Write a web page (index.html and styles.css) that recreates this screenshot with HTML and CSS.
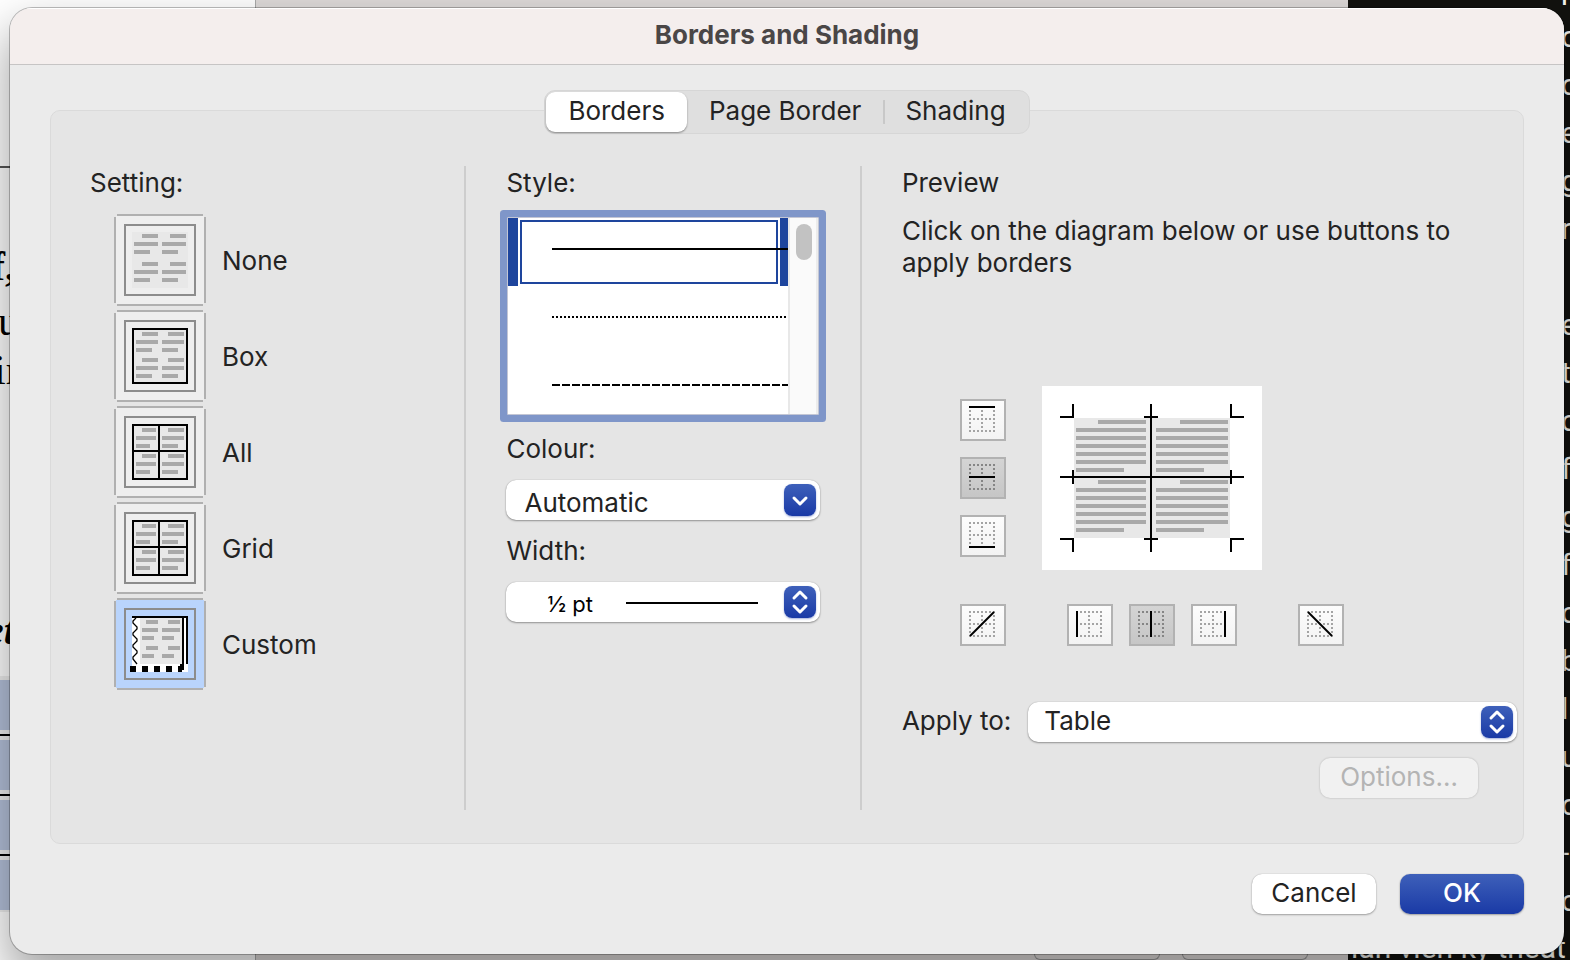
FILE: index.html
```html
<!DOCTYPE html>
<html lang="en-GB">
<head>
<meta charset="utf-8">
<meta name="viewport" content="width=device-width, initial-scale=1">
<title>Borders and Shading</title>
<link rel="stylesheet" href="styles.css">
</head>
<body>
<svg class="defs" aria-hidden="true">
  <defs>
    <symbol id="tile" viewBox="0 0 92 92">
      <path d="M3 1H89M3 91H89M1 3V89M91 3V89" stroke="#b0b0b0" stroke-width="2"/>
      <rect x="11" y="11" width="70" height="70" fill="none" stroke="#8c8c8c" stroke-width="2"/>
    </symbol>
    <symbol id="cells" viewBox="0 0 92 92">
      <rect x="19" y="19" width="54" height="54" fill="#e8e8e8" stroke="#000" stroke-width="2"/>
      <path d="M45 18V74M18 45H74" stroke="#000" stroke-width="2"/>
      <path d="M28 24H42M54 24H70M22 32H42M48 32H70M22 40H36M48 40H64M28 50H42M54 50H70M22 58H42M48 58H70M22 66H36M48 66H64" stroke="#a9a9a9" stroke-width="4"/>
    </symbol>
    <symbol id="dots" viewBox="0 0 42 38">
      <path d="M7 6H33M7 18H33M7 30H33" stroke="currentColor" stroke-width="2" stroke-dasharray="2 2"/>
      <path d="M8 5V31M20 5V31M32 5V31" stroke="currentColor" stroke-width="2" stroke-dasharray="2 2"/>
    </symbol>
    <symbol id="updown" viewBox="0 0 32 32">
      <path d="M10 12L16 6L22 12M10 20L16 26L22 20" fill="none" stroke="#fff" stroke-width="3" stroke-linecap="round" stroke-linejoin="round"/>
    </symbol>
    <symbol id="down" viewBox="0 0 32 32">
      <path d="M10 14L16 20L22 14" fill="none" stroke="#fff" stroke-width="3" stroke-linecap="round" stroke-linejoin="round"/>
    </symbol>
  </defs>
</svg>

<div class="desktop" aria-hidden="true">
  <div class="page">
    <span class="rule"></span>
    <span class="word w1">f,</span>
    <span class="word w2">u</span>
    <span class="word w3">in</span>
    <span class="word w4">et</span>
    <span class="rows"><i></i><b></b><i></i><b></b><i></i><b></b><i></i></span>
  </div>
  <div class="back"><span></span><span></span></div>
  <div class="dark">
    <p class="lines">p<br>o<br>o<br>e<br>g<br>r<br><br>e<br>t<br>c<br>fa<br>g<br>fo<br>c<br>b<br>l<br>u<br>o<br>-<br>c</p>
    <p class="last">ıan vıen ky theat</p>
  </div>
</div>

<main class="dialog" role="dialog" aria-labelledby="title">
  <header class="titlebar"><h1 id="title">Borders and Shading</h1></header>
  <div class="content">
    <nav class="tabs" role="tablist">
      <button class="tab active" role="tab" aria-selected="true">Borders</button>
      <button class="tab" role="tab">Page Border</button>
      <button class="tab last-tab" role="tab">Shading</button>
    </nav>
    <div class="panel">
      <fieldset class="column setting">
        <legend class="label">Setting:</legend>
        <div class="choices">
          <label class="choice"><input type="radio" name="setting">
            <svg class="tile" viewBox="0 0 92 92"><use href="#tile"/>
              <path d="M18 18H74V74H18Z" fill="#e8e8e8"/>
              <path d="M28 22H44M56 22H72M20 30H44M48 30H72M20 38H36M48 38H64M28 50H44M56 50H72M20 58H44M48 58H72M20 66H36M48 66H64" stroke="#a9a9a9" stroke-width="4"/>
            </svg><span>None</span></label>
          <label class="choice"><input type="radio" name="setting">
            <svg class="tile" viewBox="0 0 92 92"><use href="#tile"/>
              <rect x="19" y="19" width="54" height="54" fill="#e8e8e8" stroke="#000" stroke-width="2"/>
              <path d="M28 24H44M54 24H70M22 32H44M48 32H70M22 40H38M48 40H64M28 50H44M54 50H70M22 58H44M48 58H70M22 66H38M48 66H64" stroke="#a9a9a9" stroke-width="4"/>
            </svg><span>Box</span></label>
          <label class="choice"><input type="radio" name="setting">
            <svg class="tile" viewBox="0 0 92 92"><use href="#tile"/><use href="#cells"/></svg><span>All</span></label>
          <label class="choice"><input type="radio" name="setting">
            <svg class="tile" viewBox="0 0 92 92"><use href="#tile"/><use href="#cells"/></svg><span>Grid</span></label>
          <label class="choice"><input type="radio" name="setting" checked>
            <svg class="tile" viewBox="0 0 92 92"><use href="#tile"/>
              <path d="M18 18H74V74H18Z" fill="#fff"/>
              <path d="M26 18H68V66H26Z" fill="#e8e8e8"/>
              <path d="M32 24H44M54 24H66M28 32H44M48 32H66M28 40H40M48 40H60M32 50H44M54 50H66M28 58H40M48 58H60" stroke="#a9a9a9" stroke-width="4"/>
              <path d="M18 19H74M69 18V72M73 18V66" stroke="#000" stroke-width="2"/>
              <path d="M16 68h6v6h-6zM28 68h6v6h-6zM40 68h6v6h-6zM52 68h6v6h-6zM64 68h2v-2h4v6h-2v2h-4z"/>
              <path d="M22 20L19 23V25L23 29V31L19 35V37L23 41V43L19 47V49L23 53V55L19 59V61L23 66" fill="none" stroke="#000" stroke-width="1.3"/>
            </svg><span>Custom</span></label>
        </div>
      </fieldset>

      <section class="column style">
        <h2 class="label" id="style-label">Style:</h2>
        <div class="listbox" role="radiogroup" aria-labelledby="style-label">
          <div class="options">
            <label class="option"><input type="radio" name="style" aria-label="Solid" checked><span class="line solid"></span></label>
            <label class="option"><input type="radio" name="style" aria-label="Dotted"><span class="line dotted"></span></label>
            <label class="option"><input type="radio" name="style" aria-label="Dashed"><span class="line dashed"></span></label>
          </div>
          <div class="track"><span class="thumb"></span></div>
        </div>
        <label class="label field-label" for="colour">Colour:</label>
        <div class="picker">
          <select id="colour" class="low"><option>Automatic</option></select>
          <svg class="knob" viewBox="0 0 32 32"><use href="#down"/></svg>
        </div>
        <label class="label field-label" for="width">Width:</label>
        <div class="picker">
          <select id="width" class="weight"><option>½ pt</option></select>
          <svg class="knob" viewBox="0 0 32 32"><use href="#updown"/></svg>
        </div>
      </section>

      <section class="column preview">
        <h2 class="label">Preview</h2>
        <p class="hint">Click on the diagram below or use buttons to apply borders</p>
        <div class="editor">
          <div class="edges vertical">
            <button class="edge" aria-label="Top border"><svg viewBox="0 0 42 38"><use href="#dots"/><path d="M7 6H33"/></svg></button>
            <button class="edge on" aria-label="Inside horizontal border"><svg viewBox="0 0 42 38"><use href="#dots"/><path d="M7 18H33"/></svg></button>
            <button class="edge" aria-label="Bottom border"><svg viewBox="0 0 42 38"><use href="#dots"/><path d="M7 30H33"/></svg></button>
          </div>
          <svg class="diagram" viewBox="0 0 220 184" role="img" aria-label="Border diagram">
            <path d="M32 32H188V152H32Z" fill="#e8e8e8"/>
            <g stroke="#a9a9a9" stroke-width="4">
              <path id="text-block" d="M56 36H104M34 44H104M34 52H104M34 60H104M34 68H104M34 76H104M34 84H82M138 36H186M114 44H186M114 52H186M114 60H186M114 68H186M114 76H186M114 84H162"/>
              <use href="#text-block" y="60"/>
            </g>
            <path d="M109 18V166M18 91H202M18 31H32M31 18V32M188 31H202M189 18V32M18 153H32M31 152V166M188 153H202M189 152V166M102 31H116M102 153H116M31 84V98M189 84V98" stroke="#000" stroke-width="2"/>
          </svg>
          <button class="edge first" aria-label="Diagonal up border"><svg viewBox="0 0 42 38"><use href="#dots"/><path d="M8 30L32 6"/></svg></button>
          <div class="edges">
            <button class="edge" aria-label="Left border"><svg viewBox="0 0 42 38"><use href="#dots"/><path d="M8 5V31"/></svg></button>
            <button class="edge on" aria-label="Inside vertical border"><svg viewBox="0 0 42 38"><use href="#dots"/><path d="M20 5V31"/></svg></button>
            <button class="edge" aria-label="Right border"><svg viewBox="0 0 42 38"><use href="#dots"/><path d="M32 5V31"/></svg></button>
          </div>
          <button class="edge" aria-label="Diagonal down border"><svg viewBox="0 0 42 38"><use href="#dots"/><path d="M8 6L32 30"/></svg></button>
        </div>
        <div class="apply">
          <label class="label" for="apply">Apply to:</label>
          <div class="picker">
            <select id="apply"><option>Table</option></select>
            <svg class="knob" viewBox="0 0 32 32"><use href="#updown"/></svg>
          </div>
        </div>
        <button class="button options-button" disabled>Options…</button>
      </section>
    </div>
    <footer class="actions">
      <button class="button">Cancel</button>
      <button class="button primary">OK</button>
    </footer>
  </div>
</main>
</body>
</html>
```

FILE: styles.css
```css
* {
  box-sizing: border-box;
}

body {
  margin: 0;
  min-height: 100vh;
  display: flex;
  position: relative;
  overflow: hidden;
  font-family: Inter, "Liberation Sans", sans-serif;
  font-size: 26px;
  line-height: 32px;
  color: #232323;
}

h1, h2, p, fieldset, legend {
  margin: 0;
  padding: 0;
  border: 0;
  font-size: inherit;
  font-weight: 400;
}

button, select {
  font: inherit;
  color: inherit;
  margin: 0;
  border: 0;
}

svg {
  display: block;
}

.defs {
  position: absolute;
  width: 0;
  height: 0;
}

/* Windows behind the dialog */
.desktop {
  position: absolute;
  inset: 0;
  overflow: hidden;
  display: flex;
}

.page {
  position: relative;
  width: 255px;
  background: #fff;
  color: #000;
  font-family: "Liberation Serif", serif;
  font-size: 42px;
}

.page .rule {
  position: absolute;
  top: 166px;
  left: 0;
  width: 20px;
  height: 2px;
  background: #555;
}

.word {
  position: absolute;
  line-height: 48px;
}

.w1 { top: 242px; left: -9px; font-weight: 700; }
.w2 { top: 297px; left: -2px; }
.w3 { top: 346px; left: -6px; }
.w4 { top: 606px; left: -15px; font-style: italic; font-weight: 700; }

.rows {
  position: absolute;
  top: 676px;
  left: 0;
  width: 100%;
  display: flex;
  flex-direction: column;
  gap: 4px;
  padding: 4px 0 2px;
  background: #eee;
}

.rows i {
  height: 50px;
  background: #b5c2db;
}

.rows b {
  height: 2px;
  background: #000;
}

.back {
  flex: 1;
  display: flex;
  align-items: flex-end;
  justify-content: flex-end;
  gap: 22px;
  padding-right: 40px;
  background: #dedad9;
  border-left: 1px solid #aaa;
}

.back span {
  width: 126px;
  height: 8px;
  border: 1px solid #999;
  border-top: 0;
  border-radius: 0 0 6px 6px;
}

.dark {
  position: relative;
  width: 222px;
  background: #12120f;
  color: #f4f4ee;
  font-family: Roboto, sans-serif;
  font-size: 30px;
}

.lines {
  position: absolute;
  top: -35px;
  left: 213px;
  line-height: 48px;
  white-space: nowrap;
}

.last {
  position: absolute;
  top: 924px;
  left: 3px;
  line-height: 48px;
  white-space: nowrap;
}

/* Dialog */
.dialog {
  position: relative;
  flex: 1;
  display: flex;
  flex-direction: column;
  margin: 8px 6px 6px 10px;
  border-radius: 22px;
  overflow: hidden;
  background: #ebebeb;
  box-shadow: 0 0 0 1px rgba(0, 0, 0, 0.25), 0 24px 48px 4px rgba(0, 0, 0, 0.35);
}

.titlebar {
  height: 57px;
  padding-top: 10px;
  background: #f4eeed;
  border-top: 1px solid #fff;
  border-bottom: 1px solid #c6c4c4;
  text-align: center;
}

.titlebar h1 {
  font-weight: 700;
  color: #4a4646;
}

.content {
  flex: 1;
  display: flex;
  flex-direction: column;
  padding: 25px 40px 40px;
}

.tabs {
  position: relative;
  z-index: 1;
  align-self: center;
  display: flex;
  align-items: center;
  height: 44px;
  margin-bottom: -24px;
  padding: 0 1px;
  border: 1px solid #d6d6d6;
  border-radius: 11px;
  background: #dfdfdf;
}

.tab {
  height: 40px;
  padding: 0 22px 2px;
  border-radius: 9px;
  background: transparent;
}

.tab.active {
  background: #fff;
  box-shadow: 0 1px 2px rgba(0, 0, 0, 0.4);
}

.last-tab {
  background: linear-gradient(#c8c8c8, #c8c8c8) left center / 2px 24px no-repeat;
}

.panel {
  flex: 1;
  display: grid;
  grid-template-columns: 414fr 396fr 664fr;
  padding: 55px 0 33px;
  border: 1px solid #dadada;
  border-radius: 10px;
  background: #e5e5e5;
}

.column {
  min-width: 0;
  padding-left: 40px;
}

.column + .column {
  border-left: 2px solid #cdcdcd;
}

.setting {
  padding-left: 39px;
}

.label {
  display: block;
  line-height: 34px;
}

.setting .label {
  float: left;
  width: 100%;
}

.choices {
  display: flex;
  flex-direction: column;
  clear: both;
  gap: 4px;
  padding: 14px 0 0 24px;
}

.choice {
  display: flex;
  align-items: center;
  gap: 16px;
  line-height: 34px;
}

.choice span {
  padding-top: 2px;
}

.choice input,
.option input {
  position: absolute;
  opacity: 0;
}

.tile {
  flex: none;
  width: 92px;
  height: 92px;
  background: linear-gradient(#eee, #eee) center / 88px 88px no-repeat;
}

.choice input:checked + .tile {
  background-image: linear-gradient(#b9d4fc, #b9d4fc);
}

.style {
  padding-right: 40px;
}

.listbox {
  display: flex;
  height: 198px;
  margin: 17px 1px 0;
  border: 1px solid #c3c6d4;
  border-radius: 1px;
  background: #fff;
  box-shadow: 0 0 0 7px #7f96c9;
}

.options {
  flex: 1;
  overflow: hidden;
}

.option {
  position: relative;
  display: flex;
  align-items: center;
  height: 68px;
  padding-left: 44px;
}

.option:has(input:checked) {
  padding-left: 34px;
  border: solid #1e459d;
  border-width: 0 8px 0 10px;
}

.option:has(input:checked)::before {
  content: "";
  position: absolute;
  inset: 2px;
  border: 2px solid #1e459d;
}

.line {
  position: relative;
  flex: 1;
  height: 2px;
  margin-bottom: 6px;
}

.solid {
  margin-right: -8px;
  background: #000;
}

.dotted {
  background: repeating-linear-gradient(90deg, #000 0 2px, transparent 2px 4px);
}

.dashed {
  background: repeating-linear-gradient(90deg, #000 0 8px, transparent 8px 10px);
}

.track {
  width: 30px;
  padding: 6px;
  border-left: 2px solid #e8e8e8;
  border-right: 2px solid #ececec;
  background: #fafafa;
}

.thumb {
  display: block;
  width: 16px;
  height: 36px;
  border-radius: 8px;
  background: #c2c2c2;
}

.field-label {
  margin-top: 18px;
  margin-bottom: 15px;
  line-height: 32px;
}

.picker + .field-label {
  margin-top: 15px;
}

.picker {
  position: relative;
  flex: 1;
  height: 40px;
}

.picker select {
  appearance: none;
  display: block;
  width: 100%;
  height: 40px;
  padding: 0 48px 2px 16px;
  border-radius: 10px;
  background: #fff;
  box-shadow: 0 0 1px rgba(0, 0, 0, 0.3), 0 1px 2px rgba(0, 0, 0, 0.35);
}

.picker .low {
  padding: 5px 48px 0 18px;
}

.picker .weight {
  padding: 4px 48px 0 41px;
  font-size: 22px;
  color: #000;
  background: linear-gradient(#000, #000) right 62px top 20px / 132px 2px no-repeat #fff;
}

.knob {
  position: absolute;
  top: 4px;
  right: 4px;
  width: 32px;
  height: 32px;
  border-radius: 8px;
  background: linear-gradient(#3e60ba, #1a3aa6);
  box-shadow: 0 1px 2px rgba(26, 58, 166, 0.4);
  pointer-events: none;
}

.hint {
  max-width: 580px;
  margin-top: 15px;
}

.editor {
  display: grid;
  grid-template-columns: 46px 220px 46px;
  gap: 34px 36px;
  margin: 107px 0 0 58px;
}

.first {
  grid-column: 1;
}

.edges {
  display: flex;
  align-items: center;
  justify-content: center;
  gap: 16px;
}

.vertical {
  flex-direction: column;
}

.edge {
  width: 46px;
  height: 42px;
  padding: 0;
  border: 2px solid #b2b2b2;
  background: linear-gradient(#fcfcfc, #f3f3f3);
  color: #a4a4a4;
}

.edge.on {
  background: linear-gradient(#d4d4d4, #c6c6c6);
  color: #858585;
}

.edge svg {
  width: 42px;
  height: 38px;
}

.edge path {
  stroke: #000;
  stroke-width: 2px;
}

#dots path {
  stroke: currentColor;
}

.diagram {
  width: 220px;
  height: 184px;
  background: #fff;
}

.apply {
  display: flex;
  align-items: center;
  gap: 17px;
  margin: 56px 6px 0 0;
}

.apply .label {
  padding-bottom: 2px;
}

.button {
  height: 40px;
  min-width: 124px;
  padding: 0 19px 2px;
  border-radius: 10px;
  background: #fff;
  box-shadow: 0 0 1px rgba(0, 0, 0, 0.3), 0 1px 2px rgba(0, 0, 0, 0.3);
}

.options-button {
  display: block;
  min-width: 158px;
  margin: 16px 45px 0 auto;
  background: #f1f1f1;
  color: #b4b4b4;
  box-shadow: 0 0 2px rgba(0, 0, 0, 0.25);
}

.primary {
  background: linear-gradient(#3e60ba, #1a3aa6);
  color: #fff;
  font-weight: 500;
}

.actions {
  display: flex;
  justify-content: flex-end;
  gap: 24px;
  margin-top: 30px;
}
```
